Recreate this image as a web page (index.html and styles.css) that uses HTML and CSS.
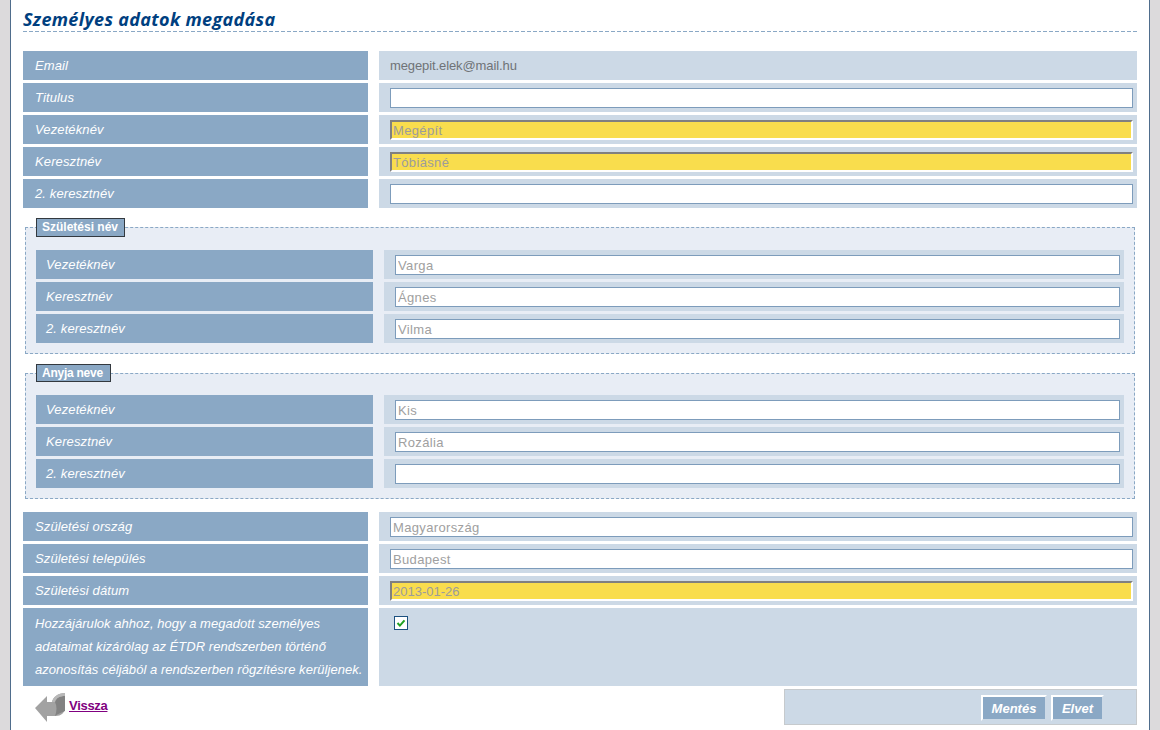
FILE: index.html
```html
<!DOCTYPE html>
<html lang="hu">
<head>
<meta charset="utf-8">
<title>Személyes adatok megadása</title>
<link rel="stylesheet" href="styles.css">
</head>
<body>
<main class="sheet">
  <h1 class="title">Személyes adatok megadása</h1>
  <div class="rows">
    <div class="row"><div class="lab">Email</div><div class="val val-text">megepit.elek@mail.hu</div></div>
    <div class="row"><div class="lab">Titulus</div><div class="val"><input class="inp" value=""></div></div>
    <div class="row"><div class="lab">Vezetéknév</div><div class="val"><input class="inp req" value="Megépít"></div></div>
    <div class="row"><div class="lab">Keresztnév</div><div class="val"><input class="inp req" value="Tóbiásné"></div></div>
    <div class="row"><div class="lab">2. keresztnév</div><div class="val"><input class="inp" value=""></div></div>
  </div>
  <fieldset class="group">
    <legend class="legend">Születési név</legend>
    <div class="rows">
      <div class="row"><div class="lab">Vezetéknév</div><div class="val"><input class="inp" value="Varga"></div></div>
      <div class="row"><div class="lab">Keresztnév</div><div class="val"><input class="inp" value="Ágnes"></div></div>
      <div class="row"><div class="lab">2. keresztnév</div><div class="val"><input class="inp" value="Vilma"></div></div>
    </div>
  </fieldset>
  <fieldset class="group">
    <legend class="legend">Anyja neve</legend>
    <div class="rows">
      <div class="row"><div class="lab">Vezetéknév</div><div class="val"><input class="inp" value="Kis"></div></div>
      <div class="row"><div class="lab">Keresztnév</div><div class="val"><input class="inp" value="Rozália"></div></div>
      <div class="row"><div class="lab">2. keresztnév</div><div class="val"><input class="inp" value=""></div></div>
    </div>
  </fieldset>
  <div class="rows rows-last">
    <div class="row"><div class="lab">Születési ország</div><div class="val"><input class="inp" value="Magyarország"></div></div>
    <div class="row"><div class="lab">Születési település</div><div class="val"><input class="inp" value="Budapest"></div></div>
    <div class="row"><div class="lab">Születési dátum</div><div class="val"><input class="inp req inp-date" value="2013-01-26"></div></div>
    <div class="row row-tall">
      <div class="lab lab-long">Hozzájárulok ahhoz, hogy a megadott személyes adataimat kizárólag az ÉTDR rendszerben történő azonosítás céljából a rendszerben rögzítésre kerüljenek.</div>
      <div class="val val-check">
        <svg class="check" width="14" height="14" viewBox="0 0 14 14" role="img" aria-label="bejelölve"><rect x="0.5" y="0.5" width="13" height="13" fill="#fff" stroke="#1c5180"/><path d="M3.500 7l2.400 2.600L10.500 4.400" fill="none" stroke="#21a121" stroke-width="2"/></svg>
      </div>
    </div>
  </div>
  <div class="footer">
    <a class="back" href="#">
      <svg class="back-icon" width="30" height="30" viewBox="0 0 30 30" aria-hidden="true">
        <path d="M0 15L12 3V9H17C18 4 23 0 30 0V16C29 20 26 23 21 23H12V29Z" fill="#a2a2a2"/>
        <path d="M20 9C21 5 25 3 30 3V18C26 20 22 21 20 23C22 18 22 13 20 9Z" fill="#828282"/>
        <path d="M17 9C18 4 23 0 30 0V3C25 3 21 5 20 9Z" fill="#b8b8b8"/>
      </svg>
      <span class="back-text">Vissza</span>
    </a>
    <div class="actions">
      <button class="btn btn-save" type="button">Mentés</button>
      <button class="btn btn-cancel" type="button">Elvet</button>
    </div>
  </div>
</main>
</body>
</html>
```
FILE: styles.css
```css
* { box-sizing: border-box; }
html, body { height: 100%; }
body {
  margin: 0;
  overflow: hidden;
  background: #dcdadc;
  font-family: "Liberation Sans", Arial, sans-serif;
}
.sheet {
  width: 1140px;
  height: 730px;
  margin-left: 10px;
  padding: 0 12px;
  background: #fff;
  border-left: 1px solid #4f6d8c;
  border-right: 1px solid #4f6d8c;
}
.title {
  margin: 0 0 19px;
  height: 32px;
  padding-top: 9px;
  background: repeating-linear-gradient(90deg, #8aa8c5 0 4px, transparent 4px 6px) left bottom / 100% 1px no-repeat;
  color: #003f7f;
  font: italic 700 18px/21px "Open Sans", sans-serif;
  letter-spacing: 0.33px;
}
.rows { display: flex; flex-direction: column; gap: 3px; }
.rows-last { margin-top: 13px; }
.row {
  display: grid;
  grid-template-columns: 345px 1fr;
  column-gap: 11px;
  height: 29px;
}
.row-tall { height: 78px; }
.lab {
  padding-left: 12px;
  background: #8aa8c5;
  color: #fff;
  font-size: 13px;
  font-style: italic;
  line-height: 29px;
  letter-spacing: 0.12px;
}
.lab-long { padding-top: 4px; line-height: 23px; letter-spacing: 0.04px; }
.val {
  padding: 5px 4px 4px 11px;
  background: #ccd9e6;
}
.val-text {
  color: #6f7377;
  font-size: 13px;
  line-height: 19px;
  letter-spacing: -0.1px;
}
.val-check { padding: 8px 0 0 15px; }
.check { display: block; }
.inp {
  display: block;
  width: 100%;
  height: 20px;
  padding: 1px 2px 0;
  border: 1px solid #7d9cbb;
  border-radius: 0;
  outline: 0;
  background: #fff;
  color: #a0a0a0;
  font: 13px "Liberation Sans", Arial, sans-serif;
  letter-spacing: 0.35px;
}
.req {
  padding-left: 1px;
  border-width: 2px;
  border-style: solid;
  border-color: #808080 #fff #fff #808080;
  background: #f9dd4d;
  color: #9c9c9c;
}
.inp-date { letter-spacing: 0; }
.group {
  min-width: 0;
  margin: 10px 2px 0;
  padding: 13px 10px 10px;
  border: 1px dashed #8aa8c5;
  background: #e8edf5;
}
.group .row { grid-template-columns: 337px 1fr; }
.group .lab { padding-left: 10px; }
.legend {
  margin-left: 0;
  padding: 0 6px 0 5px;
  height: 19px;
  border: 1px solid #33393f;
  background: #8aa8c5;
  color: #fff;
  font-size: 12px;
  font-weight: 700;
  line-height: 17px;
}
.group + .group .legend { height: 18px; padding-right: 7px; line-height: 16px; letter-spacing: -0.25px; }
.footer {
  display: flex;
  justify-content: space-between;
  margin-top: 3px;
}
.back {
  display: flex;
  align-items: flex-start;
  gap: 4px;
  height: 36px;
  margin-left: 12px;
  padding-top: 4px;
  color: #800080;
  font-size: 13px;
  font-weight: 700;
  letter-spacing: -0.3px;
}
.back-icon { display: block; }
.back-text { margin-top: 5px; line-height: 16px; }
.actions {
  display: flex;
  justify-content: flex-end;
  gap: 4px;
  width: 353px;
  height: 36px;
  padding: 5px 32px 0 0;
  border: 1px solid #c6cacd;
  background: #ccd9e6;
}
.btn {
  height: 26px;
  padding: 0;
  border: 2px solid #fff;
  border-right-color: #ccd9e6;
  border-bottom-color: #ccd9e6;
  border-radius: 0;
  background: #8aa8c5;
  color: #fff;
  font: italic 700 13px "Liberation Sans", Arial, sans-serif;
}
.btn-save { width: 66px; }
.btn-cancel { width: 53px; }
```
